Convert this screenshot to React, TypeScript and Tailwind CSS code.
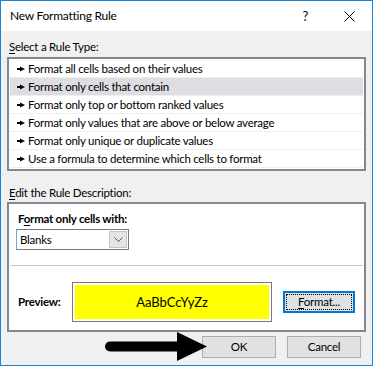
import React from "react";

const font = { fontFamily: 'Lato, "Noto Sans", sans-serif' };

function Bullet() {
  return (
    <svg width="8" height="6" viewBox="0 0 8 6" className="shrink-0">
      <rect x="0" y="2" width="4" height="2" fill="#000" />
      <polygon points="3,0.5 8,3 3,5.5" fill="#000" />
    </svg>
  );
}

const rules = [
  "Format all cells based on their values",
  "Format only cells that contain",
  "Format only top or bottom ranked values",
  "Format only values that are above or below average",
  "Format only unique or duplicate values",
  "Use a formula to determine which cells to format",
];

export default function App() {
  return (
    <div
      className="relative w-[373px] h-[366px] border border-[#1883d7] bg-[#f0f0f0] flex flex-col text-[11.5px] tracking-[-0.25px] text-black overflow-hidden"
      style={font}
    >
      {/* Title bar */}
      <div className="h-[30px] bg-white flex items-center pl-[9px] shrink-0">
        <span className="text-[12px] leading-none">New Formatting Rule</span>
        <span className="ml-auto text-[13px] leading-none mr-[36px]">?</span>
        <svg width="11" height="11" viewBox="0 0 11 11" className="mr-[17px]">
          <line x1="0.5" y1="0.5" x2="10.5" y2="10.5" stroke="#000" strokeWidth="1" />
          <line x1="10.5" y1="0.5" x2="0.5" y2="10.5" stroke="#000" strokeWidth="1" />
        </svg>
      </div>

      {/* Body */}
      <div className="flex flex-col px-[6px] flex-1">
        <div className="mt-[8px] pl-[2px] h-[18px] leading-[16px]">
          <span className="underline underline-offset-2">S</span>elect a Rule Type:
        </div>

        <div className="border-2 border-[#828790] bg-white py-[1px] px-[1px] h-[114px]">
          {rules.map((r, i) => (
            <div
              key={r}
              className={
                "h-[18px] flex items-center gap-[3px] pl-[7px] border-b border-[#efefef] " +
                (i === 1 ? "bg-[#dedee2]" : "")
              }
            >
              <Bullet />
              <span className="leading-none whitespace-nowrap">{r}</span>
            </div>
          ))}
        </div>

        <div className="mt-[14px] pl-[2px] h-[17px] leading-[16px]">
          <span className="underline underline-offset-2">E</span>dit the Rule Description:
        </div>

        <div className="border-2 border-[#828790] bg-white h-[130px] flex flex-col">
          <div className="pt-[7px] pl-[9px] font-bold h-[25px] leading-[16px]">
            F<span className="underline underline-offset-2">o</span>rmat only cells with:
          </div>
          <div className="ml-[7px] w-[113px] h-[21px] border border-[#7a7a7a] border-l-[#6aa7e0] flex items-stretch bg-white">
            <div className="flex-1 flex items-center pl-[3px] leading-none">Blanks</div>
            <div className="w-[18px] my-[1px] mr-[1px] bg-[#e5e5e5] border border-[#c4c4c4] flex items-center justify-center">
              <svg width="9" height="5" viewBox="0 0 9 5">
                <polyline points="0.5,0.5 4.5,4.5 8.5,0.5" fill="none" stroke="#555" strokeWidth="1" />
              </svg>
            </div>
          </div>
          <div className="mt-[15px] mx-[1px] border-t border-[#c8c8c8]" />
          <div className="flex items-center pt-[16px] pl-[9px]">
            <div className="font-bold w-[54px] leading-none">Preview:</div>
            <div className="w-[200px] h-[40px] border border-[#7a7a7a] p-[2px] bg-white">
              <div className="w-full h-full bg-[#ffff00] flex items-center justify-center text-[13px] tracking-normal leading-none">
                AaBbCcYyZz
              </div>
            </div>
            <div className="ml-[11px] w-[72px] h-[22px] border-2 border-[#0078d7] bg-[#e1e1e1] p-[1px]">
              <div className="w-full h-full border border-dotted border-black flex items-center justify-center leading-none">
                <span>
                  <span className="underline underline-offset-2">F</span>ormat...
                </span>
              </div>
            </div>
          </div>
        </div>

        <div className="flex justify-end gap-[11px] mt-[4px] pr-[5px]">
          <div className="w-[74px] h-[22px] bg-[#e1e1e1] border border-[#adadad] flex items-center justify-center leading-none">
            OK
          </div>
          <div className="w-[74px] h-[22px] bg-[#e1e1e1] border border-[#adadad] flex items-center justify-center leading-none">
            Cancel
          </div>
        </div>
      </div>

      {/* Black arrow overlay */}
      <svg
        className="absolute left-0 top-0 pointer-events-none"
        width="373"
        height="366"
        viewBox="0 0 373 366"
      >
        <line x1="109" y1="345.5" x2="180" y2="345.5" stroke="#000" strokeWidth="10" strokeLinecap="round" />
        <polygon points="176,331 206,345.5 176,360" fill="#000" />
      </svg>
    </div>
  );
}
